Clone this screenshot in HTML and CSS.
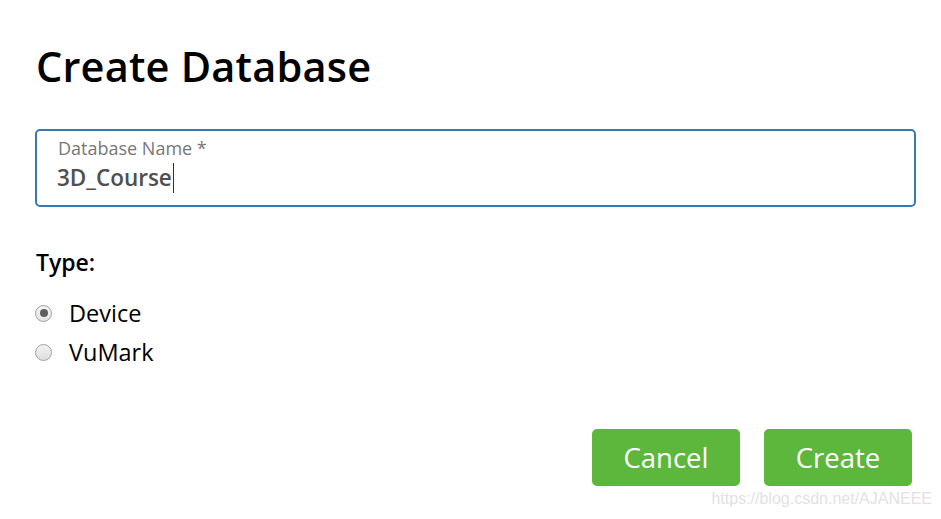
FILE: index.html
```html
<!DOCTYPE html>
<html>
<head>
<meta charset="utf-8">
<link rel="stylesheet" href="styles.css">
</head>
<body>
<div class="dialog">
  <h1 class="title">Create Database</h1>
  <div class="field">
    <div class="field-label">Database Name *</div>
    <div class="field-value">3D_Course<span class="caret"></span></div>
  </div>
  <div class="type-label">Type:</div>
  <div class="radios">
    <label class="radio-row"><span class="radio checked"><span class="dot"></span></span><span class="radio-text">Device</span></label>
    <label class="radio-row"><span class="radio"></span><span class="radio-text">VuMark</span></label>
  </div>
  <div class="actions">
    <button class="btn">Cancel</button>
    <button class="btn">Create</button>
  </div>
  <div class="watermark">https://blog.csdn.net/AJANEEE</div>
</div>
</body>
</html>
```
FILE: styles.css
```css
* { box-sizing: border-box; }
html, body { margin: 0; padding: 0; background: #fff; }
body { font-family: "Open Sans", "Noto Sans", sans-serif; color: #000; width: 941px; height: 519px; overflow: hidden; }
.dialog { padding: 40px 25px 0 35px; position: relative; height: 519px; }
.title { margin: 0; font-size: 41.5px; font-weight: 600; line-height: 52px; letter-spacing: 0.2px; padding-left: 1px; }
.field { margin-top: 37px; width: 881px; height: 78px; border: 2px solid #3679b5; border-radius: 5px; padding: 6px 0 0 20px; }
.field-label { font-size: 18px; color: #777; line-height: 22px; padding-left: 1px; }
.field-value { font-size: 22.5px; font-weight: 600; color: #4f4f4f; line-height: 30px; margin-top: 4px; display: flex; align-items: center; }
.caret { display: inline-block; width: 1px; height: 30px; background: #333; margin-left: 1px; }
.type-label { margin-top: 40px; font-size: 23px; font-weight: 600; line-height: 30px; padding-left: 1px; }
.radios { margin-top: 22px; display: flex; flex-direction: column; gap: 11px; }
.radio-row { display: flex; align-items: center; height: 28px; }
.radio { width: 17px; height: 17px; border-radius: 50%; border: 1px solid #a0a0a0; background: linear-gradient(#f3f3f3, #dcdcdc); display: flex; align-items: center; justify-content: center; }
.radio.checked { background: linear-gradient(#f4f4f4, #e4e4e4); }
.dot { width: 8px; height: 8px; border-radius: 50%; background: #5e5e5e; }
.radio-text { margin-left: 17px; font-size: 23.5px; line-height: 28px; }
.actions { margin-top: 63px; display: flex; justify-content: flex-end; gap: 24px; padding-right: 4px; }
.btn { width: 148px; height: 57px; background: #5cb73c; border: none; border-radius: 5px; color: #fff; font-family: "Open Sans", "Noto Sans", sans-serif; font-size: 27.5px; padding: 0; }
.watermark { position: absolute; right: 9px; top: 490px; font-family: "Liberation Sans", Arial, sans-serif; font-size: 16px; color: #e2e2e2; }
```
